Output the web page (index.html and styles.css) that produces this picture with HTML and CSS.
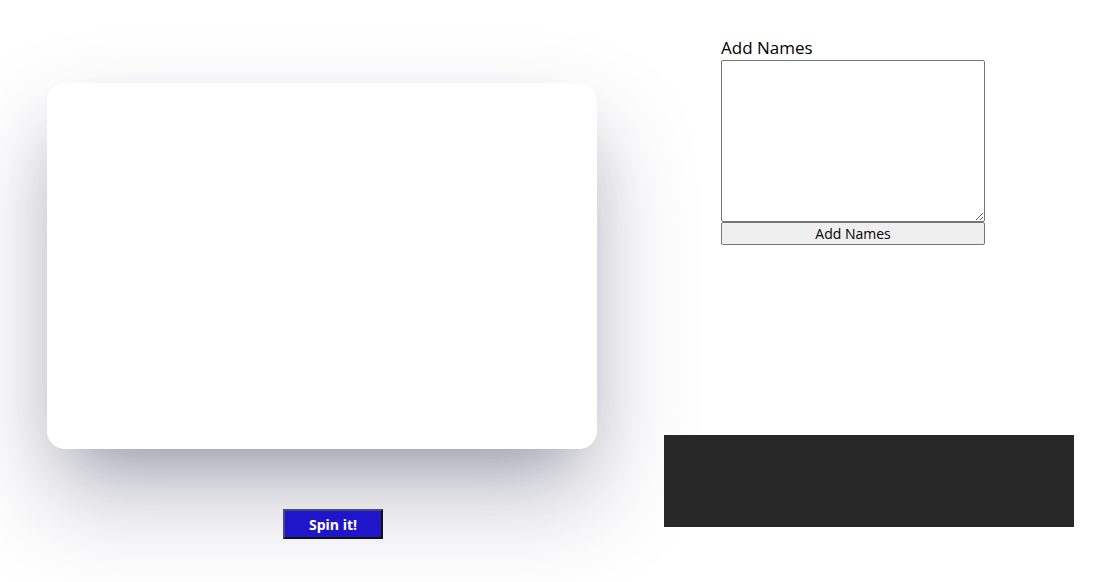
FILE: index.html
```html
<!DOCTYPE html>
<html lang="en">
<head>
    <meta charset="UTF-8">
    <meta name="viewport" content="width=device-width, initial-scale=1.0">
    <title>Spin the Wheel</title>
    <link rel="stylesheet" href="styles.css">
</head>
<body>
    <div class="page">
        <!-- Roda -->
        <div class="wheel-side">
            <div class="wheel-card"></div>
            <button class="spin-button">Spin it!</button>
        </div>

        <!-- Nomes -->
        <div class="names-side">
            <div class="names-form">
                <label for="names">Add Names</label>
                <textarea id="names"></textarea>
                <button class="add-button">Add Names</button>
            </div>
            <div class="result-box"></div>
        </div>
    </div>
</body>
</html>
```

FILE: styles.css
```css
html, body {
    min-height: 100%;
}
body {
    font-family: "Open Sans", Arial, sans-serif;
    margin: 0;
    padding: 0;
    background-color: #fff;
    color: #000;
    min-height: 100vh;
}
.page {
    display: flex;
    align-items: flex-start;
    gap: 67px;
    padding-left: 47px;
    min-height: 100vh;
    box-sizing: border-box;
}
.wheel-side {
    display: flex;
    flex-direction: column;
    padding-top: 83px;
}
.wheel-card {
    width: 550px;
    height: 366px;
    background-color: #fff;
    border-radius: 18px;
    box-shadow: 0 50px 100px rgba(50, 50, 93, 0.28), 0 30px 60px -30px rgba(0, 0, 0, 0.3);
}
.spin-button {
    margin-top: 60px;
    margin-left: 236px;
    width: 100px;
    height: 30px;
    padding: 0;
    font-family: inherit;
    font-size: 14px;
    font-weight: bold;
    color: #fff;
    background-color: #1f16cc;
    border: 2px solid #111;
    border-color: #4a4a78 #111 #111 #4a4a78;
    cursor: pointer;
}
.names-side {
    width: 410px;
    display: flex;
    flex-direction: column;
}
.names-form {
    display: flex;
    flex-direction: column;
    width: 264px;
    margin-left: 57px;
    padding-top: 36px;
}
.names-form label {
    font-size: 17px;
    line-height: 24px;
}
.names-form textarea {
    width: 264px;
    height: 162px;
    margin: 0;
    padding: 2px;
    border: 1px solid #767676;
    border-radius: 2px;
    box-sizing: border-box;
    display: block;
}
.add-button {
    width: 264px;
    height: 23px;
    margin: 0;
    padding: 0;
    font-family: inherit;
    font-size: 14px;
    color: #000;
    background-color: #efefef;
    border: 1px solid #767676;
    border-radius: 2px;
    cursor: pointer;
}
.result-box {
    margin-top: 190px;
    width: 410px;
    height: 92px;
    background-color: #282828;
}
```
